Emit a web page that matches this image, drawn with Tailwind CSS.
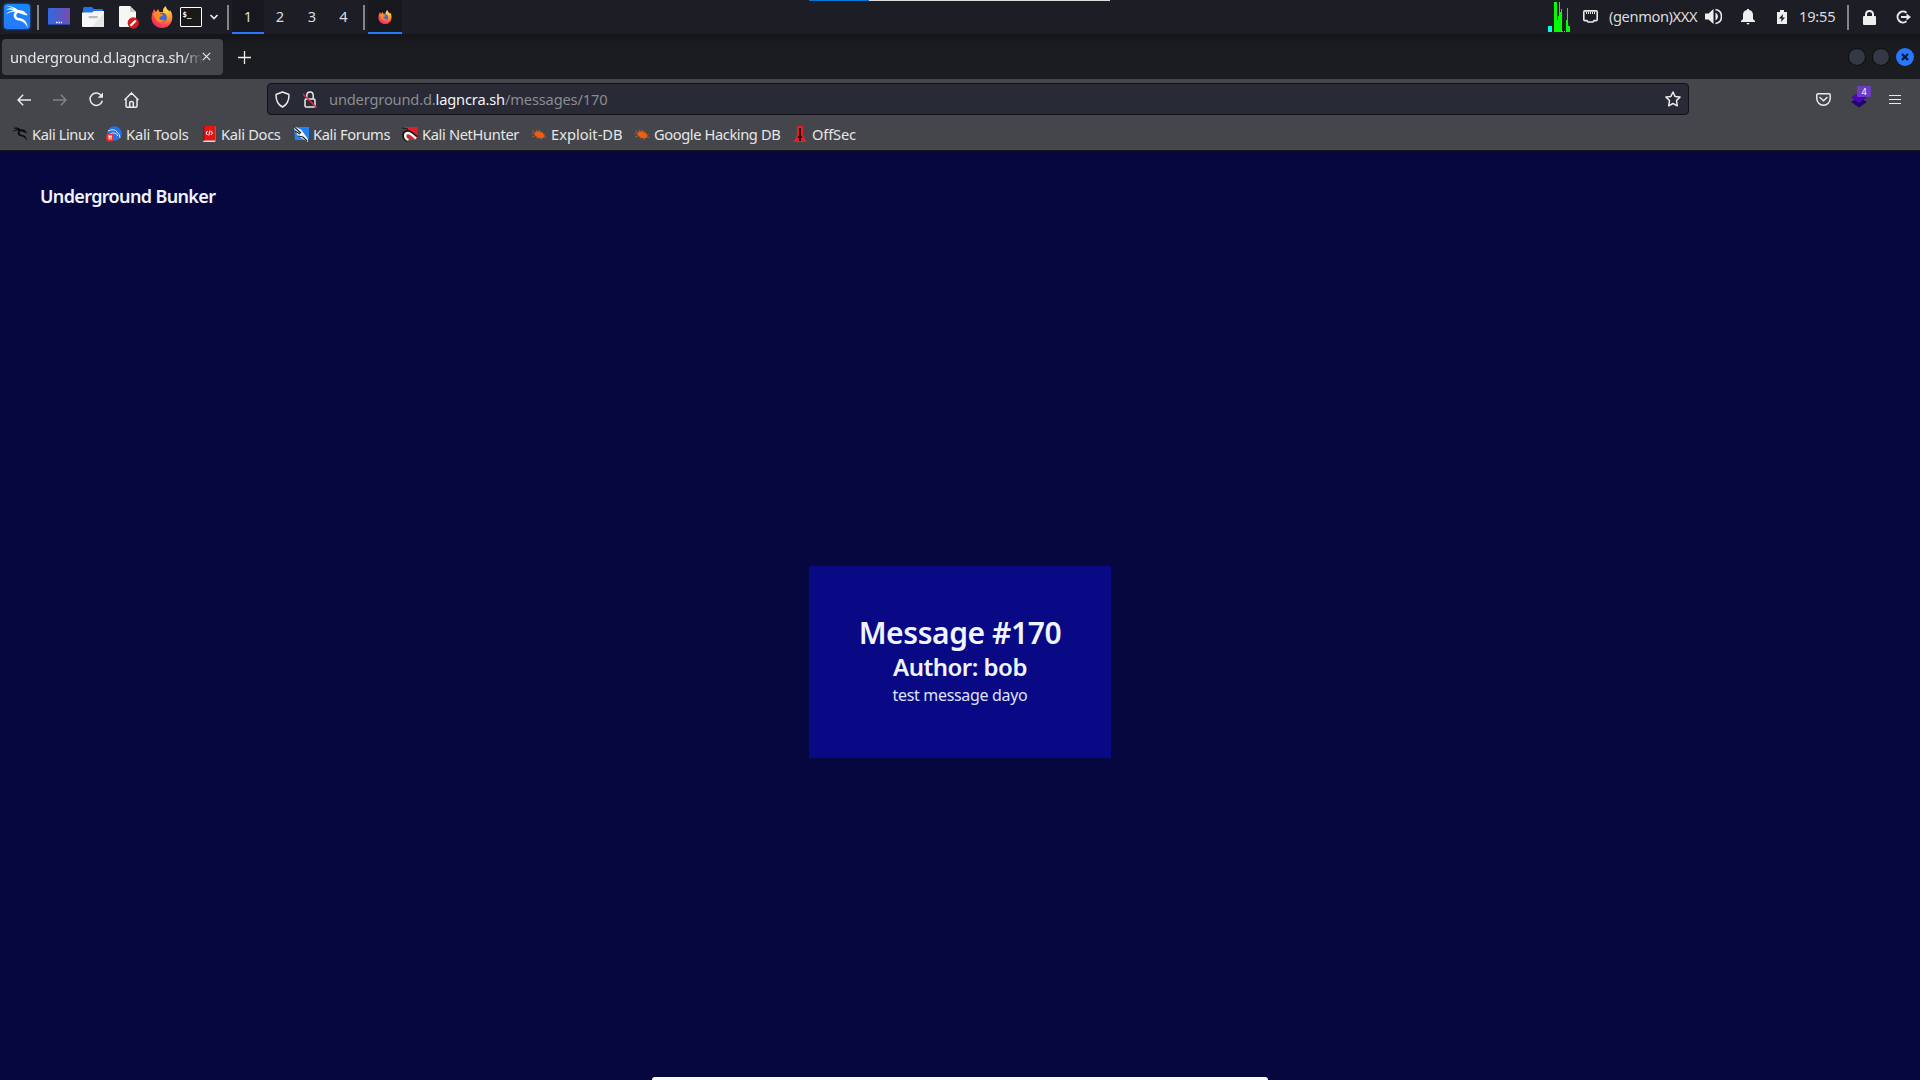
<!DOCTYPE html>
<html lang="en">
<head>
<meta charset="utf-8">
<title>Underground Bunker</title>
<script src="https://cdn.jsdelivr.net/npm/@tailwindcss/browser@4"></script>
</head>
<body class="w-[1920px] h-[1080px] overflow-hidden bg-[#070740] font-['Noto_Sans',sans-serif] text-[14.67px] flex flex-col relative">
<svg class="absolute w-0 h-0">
  <defs>
    <radialGradient id="ffx" cx=".75" cy=".15" r="1"><stop offset="0" stop-color="#ffe14a"/><stop offset=".4" stop-color="#ff9a2b"/><stop offset=".75" stop-color="#ff4250"/><stop offset="1" stop-color="#e0207a"/></radialGradient>
    <linearGradient id="desk"><stop offset="0" stop-color="#2f6ae0"/><stop offset="1" stop-color="#7a4bb0"/></linearGradient>
    <symbol id="firefox" viewBox="0 0 22 22">
      <path fill="url(#ffx)" d="M1 8 L3 3 L5 6 L7 3 L8.500 6 L12 6 C11.500 3 13 1 15 0 C15 3 17 3.500 18.500 5.500 L19 4 C21 7 21.500 9 21.300 12 C21 18 16.500 22 11 22 C5 22 .5 17.500 .5 12 Z"/>
      <circle cx="11.300" cy="11.500" r="4.700" fill="#4169d8"/>
      <path fill="#ff8a1f" d="M2 8 C5 6 8 7 9 8 L12 8.500 C12 10.500 9 10.200 8.500 11.500 C8 14 11 15 14 13.500 C12 17.500 6.500 17 5 13 Z"/>
    </symbol>
    <symbol id="bug" viewBox="0 0 16 16">
      <ellipse cx="8.500" cy="8.500" rx="5.200" ry="3.200" transform="rotate(22 8 8.500)" fill="#ef5f12"/>
      <path d="M1 4.500 L5 7 M.5 7.500 L4 8 M1 11 L5 9.500 M5 3.500 L7 7 M8 3.500 L9.500 7 M11 5.500 L11 8 M14.500 8.500 L12 9.500 M15.500 11.500 L12 10.500 M6 13 L7 10 M10 14 L9.500 11" stroke="#c35a26" stroke-width=".8" fill="none"/>
    </symbol>
    <symbol id="dragon" viewBox="0 0 24 24">
      <path d="M.5 1 C5 .8 10 2 13 5 C16 5.500 18 5 19.500 7 L22.500 9.500 L21.500 10.500 L18 9.500 C16 8.500 14 8 12.500 8 C10.500 10 11 12.500 13.500 13 C19 13.500 21.500 15.500 23 23 C20.500 18.500 18 16 13.500 15.500 C8.500 14.800 7.500 10 10 7 C7 6.500 4 7.500 .8 9.500 C3 6.800 5.500 5.700 8.500 5.400 C6 4.300 3.500 4.300 1 5 C3.500 3 6 3 9 3.800 C6.500 2.200 3.500 1.500 .5 1Z"/>
    </symbol>
  </defs>
</svg>

<!-- desktop panel -->
<header class="h-[35px] shrink-0 bg-[#1c1d25] flex text-[#dcdcdc] border-b border-[#16171b] relative">
  <div class="absolute top-0 left-[809px] w-[301px] h-px bg-[#dedede] flex"><div class="w-[60px] h-px bg-[#0078d7]"></div></div>
  <div class="w-[37px] pl-[4px] pt-[4px]"><div class="w-[26px] h-[25px] rounded-[3px] bg-linear-to-b from-[#1688fa] to-[#2878fb] shadow-[0_0_3px_#1876ed] flex items-center justify-center"><svg class="w-6 h-6" fill="#fff"><use href="#dragon"/></svg></div></div>
  <div class="w-[2px] h-[25px] mt-[5px] bg-[#858585]"></div>
  <svg class="w-[22px] h-[17px] ml-[9px] mt-[8px]" viewBox="0 0 22 17"><rect width="22" height="17" rx="1" fill="url(#desk)"/><rect y="16" width="22" height="1" fill="#2547a8"/><path d="M8 14.500h1.500M10.500 14.500h1.500M13 14.500h1" stroke="#fff" stroke-width="1.500"/></svg>
  <svg class="w-[22px] h-[20px] ml-[12px] mt-[7px]" viewBox="0 0 22 20"><path d="M1 6V1.500Q1 0 2.500 0H10L12 2H20Q21 2 21 3V6Z" fill="#2372e8"/><path d="M0 5.500H10L12 4H22V19Q22 20 21 20H1Q0 20 0 19Z" fill="#f6f6f6"/><path d="M10 20L22 6V20Z" fill="#e6e6e6"/><rect x="6.500" y="9" width="9.500" height="2.200" rx="1.100" fill="#bbb"/></svg>
  <svg class="w-[22px] h-[24px] ml-[14px] mt-[5px]" viewBox="0 0 22 24"><path d="M1 2Q1 1 2 1H12L18 7V22H2Q1 22 1 21Z" fill="#f6f6f6"/><path d="M12 1V7H18Z" fill="#ccc"/><circle cx="15.300" cy="18" r="5.700" fill="#d31a20"/><path d="M12.500 20.800L17.800 15.500" stroke="#fff" stroke-width="2.200"/></svg>
  <svg class="w-[22px] h-[22px] ml-[11px] mt-[6px]"><use href="#firefox"/></svg>
  <div class="w-[22px] h-[20px] ml-[7px] mt-[7px] border border-white bg-[#191919] rounded-[1px]"><svg class="w-5 h-[18px]" viewBox="0 0 20 18"><text x="1.500" y="9" font-family="DejaVu Sans Mono" font-size="7.500" font-weight="bold" fill="#fff">$_</text></svg></div>
  <svg class="w-[10px] h-[8px] ml-[7px] mt-[13px]" viewBox="0 0 10 8"><path d="M1.500 2L5 5.500L8.500 2" stroke="#e8e8e8" stroke-width="1.700" fill="none"/></svg>
  <div class="w-[2px] h-[25px] mt-[5px] ml-[8px] bg-[#858585]"></div>
  <div class="ml-[3px] w-[32px] h-[34px] bg-[#17181d] border-b-2 border-[#2777ff] text-center leading-[33px]">1</div>
  <div class="w-[32px] text-center leading-[33px]">2</div>
  <div class="w-[32px] text-center leading-[33px]">3</div>
  <div class="w-[31px] text-center leading-[33px]">4</div>
  <div class="w-[2px] h-[25px] mt-[5px] ml-[4px] bg-[#858585]"></div>
  <div class="ml-[3px] w-[34px] h-[34px] bg-[#17181d] border-b-2 border-[#2777ff] flex justify-center pt-[10px]"><svg class="w-[14px] h-[14px]"><use href="#firefox"/></svg></div>

  <div class="ml-auto flex">
    <svg class="w-[22px] h-[30px] mt-[2px]" viewBox="0 0 22 30" shape-rendering="crispEdges"><rect y="24" width="4" height="6" fill="#00ffdc"/><path fill="#0f0" d="M6 30V0H9V18H10V14H11V0H12V10H13V7H14V29H15V30ZM16 29h1v1h-1ZM18 30V18H19V6H20V24H22V30Z"/></svg>
    <svg class="w-[15px] h-[13px] ml-[13px] mt-[10px]" viewBox="0 0 15 13" fill="none" stroke="#e8e8e8"><path d="M1.800 .9H13.200Q14.200 .9 14.200 2V9.500Q14.200 10.600 13.200 10.600H11L10 12H5L4 10.600H1.800Q.8 10.600 .8 9.500V2Q.8 .9 1.800 .9Z" stroke-width="1.600"/><path d="M3.500 2V4M5.500 2V4M7.500 2V4M9.500 2V4M11.500 2V4"/></svg>
    <div class="w-[107px] pl-[11px] whitespace-nowrap leading-[33px] tracking-[-0.4px]">(genmon)XXX</div>
    <svg class="w-[17px] h-[17px] ml-0 mt-[8px]" viewBox="0 0 17 17"><path d="M0 5.500H3.500L8.500 1V16L3.500 11.500H0Z" fill="#eee"/><path d="M10.500 4.500Q13 6 13 8.500T10.500 12.500Z" fill="#eee"/><path d="M10.500 1.500C18.500 3 18.500 14 10.500 15.500" fill="none" stroke="#eee" stroke-width="1.600"/></svg>
    <svg class="w-[14px] h-[16px] ml-[19px] mt-[9px]" viewBox="0 0 14 16" fill="#eee"><path d="M0 13V12L2 10V6C2 3 3.500 1.500 6 1V0H8V1C10.500 1.500 12 3 12 6V10L14 12V13ZM5.500 14H8.500Q8 15.500 7 15.500T5.500 14Z"/></svg>
    <svg class="w-[10px] h-[14px] ml-[22px] mt-[10px]" viewBox="0 0 10 14"><path d="M0 2H3V0H7V2H10V14H0Z" fill="#eee"/><path d="M6 4L2 8.500H4.500L4 12L8 7.500H5.500Z" fill="#1c1d25"/></svg>
    <div class="w-[60px] pl-[12px] whitespace-nowrap leading-[33px] tracking-[-0.2px]">19:55</div>
    <div class="w-[2px] h-[25px] mt-[5px] bg-[#858585]"></div>
    <svg class="w-[13px] h-[15px] ml-[14px] mt-[10px]" viewBox="0 0 13 15"><rect y="6" width="13" height="9" rx="1" fill="#eee"/><path d="M3 7V4.500Q3 1 6.500 1T10 4.500V7" fill="none" stroke="#eee" stroke-width="2"/></svg>
    <svg class="w-[15px] h-[14px] ml-[20px] mr-[9px] mt-[10px]" viewBox="0 0 15 14" fill="none" stroke="#e8e8e8" stroke-width="2"><path d="M10.500 2.700A5.500 5.500 0 1 0 10.500 11.300M5 7H12"/><path d="M10.500 3.500L15 7L10.500 10.500Z" fill="#e8e8e8" stroke="none"/></svg>
  </div>
</header>

<!-- tab strip -->
<div class="h-[44px] shrink-0 bg-linear-to-b from-[#15161a] to-[#1b1c20] to-30% flex items-start">
  <div class="ml-[2px] mt-[4px] w-[221px] h-[36px] rounded-[4px] bg-[#45464b] flex items-center pl-[8px] text-[#e6e6e6]">
    <div class="w-[193px] overflow-hidden whitespace-nowrap mask-r-from-89% mask-r-to-100% h-5 leading-5 tracking-[-0.25px]">underground.d.lagncra.sh/messages/170</div>
    <svg class="w-[9px] h-[9px] -ml-px -mt-px" viewBox="0 0 9 9"><path d="M.8 .8L8.200 8.200M8.200 .8L.8 8.200" stroke="#e6e6e6" stroke-width="1.200"/></svg>
  </div>
  <svg class="w-[13px] h-[13px] ml-[15px] mt-[16px]" viewBox="0 0 13 13"><path d="M6.500 0V13M0 6.500H13" stroke="#eee" stroke-width="1.300"/></svg>
  <div class="ml-auto mr-[6px] mt-[13px] flex gap-[6px]">
    <div class="w-[18px] h-[18px] rounded-full bg-[#353945] border border-[#0a0b0d]"></div>
    <div class="w-[18px] h-[18px] rounded-full bg-[#353945] border border-[#0a0b0d]"></div>
    <div class="w-[18px] h-[18px] rounded-full bg-[#2777ff] flex items-center justify-center"><svg class="w-2 h-2" viewBox="0 0 8 8"><path d="M1 1L7 7M7 1L1 7" stroke="#0c1730" stroke-width="2.200"/></svg></div>
  </div>
</div>

<!-- navigation and bookmarks -->
<div class="h-[72px] shrink-0 bg-[#45464b] border-b border-[#151619]">
  <div class="h-[41px] flex items-center text-[#e8e8e8]">
    <svg class="w-[14px] h-[12px] ml-[17px]" viewBox="0 0 14 12" fill="none" stroke="#eaeaea" stroke-width="1.400"><path d="M14 6H1M6.200 .8L1 6L6.200 11.200"/></svg>
    <svg class="w-[14px] h-[12px] ml-[22px]" viewBox="0 0 14 12" fill="none" stroke="#828388" stroke-width="1.400"><path d="M0 6H13M7.800 .8L13 6L7.800 11.200"/></svg>
    <svg class="w-[15px] h-[15px] ml-[22px]" viewBox="0 0 15 15" fill="none" stroke="#eaeaea" stroke-width="1.500"><path d="M12.500 3.800A6.200 6.200 0 1 0 13.300 8.700"/><path d="M14 .5V5.800H8.700Z" fill="#eaeaea" stroke="none"/></svg>
    <svg class="w-[15px] h-[16px] ml-[20px]" viewBox="0 0 15 16" fill="none" stroke="#eaeaea" stroke-width="1.500"><path d="M.5 8L7.500 1L14.500 8M2 7V14Q2 15.200 3.200 15.200H11.800Q13 15.200 13 14V7M5.700 15V10.500Q5.700 9.500 7.500 9.500T9.300 10.500V15"/></svg>
    <div class="ml-[128px] w-[1422px] h-[32px] rounded-[4px] bg-[#282a36] border border-[#111217] flex items-center -mt-px">
      <svg class="w-[15px] h-[17px] ml-[7px]" viewBox="0 0 15 17" fill="none" stroke="#eaeaea" stroke-width="1.500"><path d="M7.500 1L13.500 3.200Q14 3.400 14 4C14 10 12.500 13.500 7.500 16C2.500 13.500 1 10 1 4Q1 3.400 1.500 3.200Z" stroke-linejoin="round"/></svg>
      <svg class="w-[14px] h-[17px] ml-[13px]" viewBox="0 0 14 17" fill="none" stroke="#eaeaea" stroke-width="1.500"><rect x="2" y="8" width="10" height="8" rx="1.200"/><path d="M3.800 8V4.500Q3.800 1 7 1T10.200 4.500V8"/><path d="M0 3L13.500 16.500" stroke="#e22850" stroke-width="1.500"/></svg>
      <div class="ml-[12px] whitespace-nowrap text-[#8b8c92] h-5 leading-5 tracking-[-0.17px]">underground.d.<span class="text-[#f3f3f3]">lagncra.sh</span>/messages/170</div>
      <svg class="w-[16px] h-[16px] ml-auto mr-[7px]" viewBox="0 0 16 16" fill="none" stroke="#eaeaea" stroke-width="1.500" stroke-linejoin="round"><path d="M8 1L10.100 5.400L15 6.100L11.500 9.500L12.300 14.800L8 12.500L3.700 14.800L4.500 9.500L1 6.100L5.900 5.400Z"/></svg>
    </div>
    <svg class="w-[15px] h-[13px] ml-[127px]" viewBox="0 0 15 13" fill="none" stroke="#eaeaea" stroke-width="1.500"><path d="M2 .8H13Q14.200 .8 14.200 2V5.500A6.700 6.700 0 0 1 .8 5.500V2Q.8 .8 2 .8Z"/><path d="M4 4.500L7.500 7.700L11 4.500" stroke-linecap="round"/></svg>
    <div class="ml-[20px] w-[20px] h-[22px] relative -mt-[5px]">
      <svg class="w-[16px] h-[16px] mt-[6px]" viewBox="0 0 16 16"><path d="M0 10L8 5L16 10L8 15.500Z" fill="#21066f"/><path d="M0 5.500L8 0L16 5.500L8 11Z" fill="#4a08b5"/></svg>
      <div class="absolute left-[6px] top-0 w-[14px] h-[11px] rounded-[1px] bg-[#6f3cc0] text-white text-[9px] leading-[11px] text-center">4</div>
    </div>
    <svg class="w-[12px] h-[11px] ml-[18px] -mt-px" viewBox="0 0 12 11" shape-rendering="crispEdges"><path d="M0 1.500H12M0 5.500H12M0 9.500H12" stroke="#eaeaea"/></svg>
  </div>
  <nav class="h-[28px] flex items-center pl-[12px] text-[#e6e6e6] whitespace-nowrap leading-5">
    <div class="w-[94px] flex items-center gap-[4px] tracking-[-0.4px]"><svg class="w-4 h-4" fill="#08090b"><use href="#dragon"/></svg>Kali Linux</div>
    <div class="w-[96px] flex items-center gap-[4px] tracking-[-0.17px]"><svg class="w-4 h-4" viewBox="0 0 16 16"><circle cx="8.500" cy="7.500" r="7.200" fill="#2872e8"/><path d="M2 5Q8 2 11 6Q14 8 14 12M4 8Q9 5 12 10" stroke="#d7e7ff" fill="none"/><circle cx="4" cy="11.500" r="4" fill="#ef3030"/><path d="M2 10H6M3.200 10V13.500M5 10V13.500" stroke="#fff"/></svg>Kali Tools</div>
    <div class="w-[91px] flex items-center gap-[5px] tracking-[-0.3px]"><svg class="w-[14px] h-4" viewBox="0 0 14 16"><rect x="1" width="12.500" height="16" rx="1" fill="#ddd"/><path d="M1 0H13.500V14.500H1Z" fill="#df1717"/><path d="M1 0H2.500V14.500H1Z" fill="#9b0f14"/><path d="M5.500 5L4 7L5.500 9M9 5L10.500 7L9 9M8 4.500L6.800 9.500" stroke="#fff" fill="none"/></svg>Kali Docs</div>
    <div class="w-[109px] flex items-center gap-[4px] tracking-[-0.35px]"><svg class="w-4 h-4" viewBox="0 0 16 16"><path d="M1 1H16V13L14 14H2Z" fill="#2483f4"/><path d="M0 0L8 3.500L15 13V16L5 10Z" fill="#f4f4f4"/><path d="M0 0L8 7M5 10L10 11L14 15M2 5L7 8" stroke="#202020" stroke-width="1.200" fill="none"/></svg>Kali Forums</div>
    <div class="w-[129px] flex items-center gap-[4px] tracking-[-0.35px]"><svg class="w-4 h-4" viewBox="0 0 16 16"><path d="M3 1H16L14.500 14H2Z" fill="#df202c"/><path d="M6 14.500C1 12 1 7 5 6C8 5 10 8 14 11.500" stroke="#181818" stroke-width="4" fill="none"/><path d="M6.500 14C2 12 2.500 7.500 5.500 7C8 6.500 10 9 14 12.500" stroke="#f7f7f7" stroke-width="2.400" fill="none"/><path d="M0 2L6 3L4 5" stroke="#181818" fill="none"/></svg>Kali NetHunter</div>
    <div class="w-[103px] flex items-center gap-[4px]"><svg class="w-4 h-4"><use href="#bug"/></svg>Exploit-DB</div>
    <div class="w-[158px] flex items-center gap-[4px] tracking-[-0.4px]"><svg class="w-4 h-4"><use href="#bug"/></svg>Google Hacking DB</div>
    <div class="flex items-center gap-[4px] tracking-[-0.15px]"><svg class="w-4 h-4" viewBox="0 0 16 16"><path d="M5 0H11V9L14.500 16H1.500L5 9Z" fill="#df2027"/><path d="M7 2H9V9L10.500 12H9V15H7V12H5.500L7 9Z" fill="#2b0507"/></svg>OffSec</div>
  </nav>
</div>

<!-- page -->
<main class="grow flex flex-col text-[#f0f4ff]">
  <div class="pl-[40px] pt-[31px] h-[92px] text-[18px] leading-7 font-semibold tracking-[-0.64px]">Underground Bunker</div>
  <div class="mx-auto mt-[323px] w-[302px] h-[192px] bg-[#090986] pt-[49px] text-center whitespace-nowrap">
    <h1 class="text-[30px] leading-9 font-semibold tracking-[-0.4px]">Message #170</h1>
    <h2 class="text-2xl leading-8 font-semibold tracking-[-0.5px]">Author: bob</h2>
    <p class="text-base leading-6 text-[#dfe3fb] tracking-[-0.33px]">test message dayo</p>
  </div>
</main>
<div class="absolute left-[652px] top-[1077px] w-[616px] h-[3px] rounded-t-[6px] bg-[#fcfcfc]"></div>
</body>
</html>
